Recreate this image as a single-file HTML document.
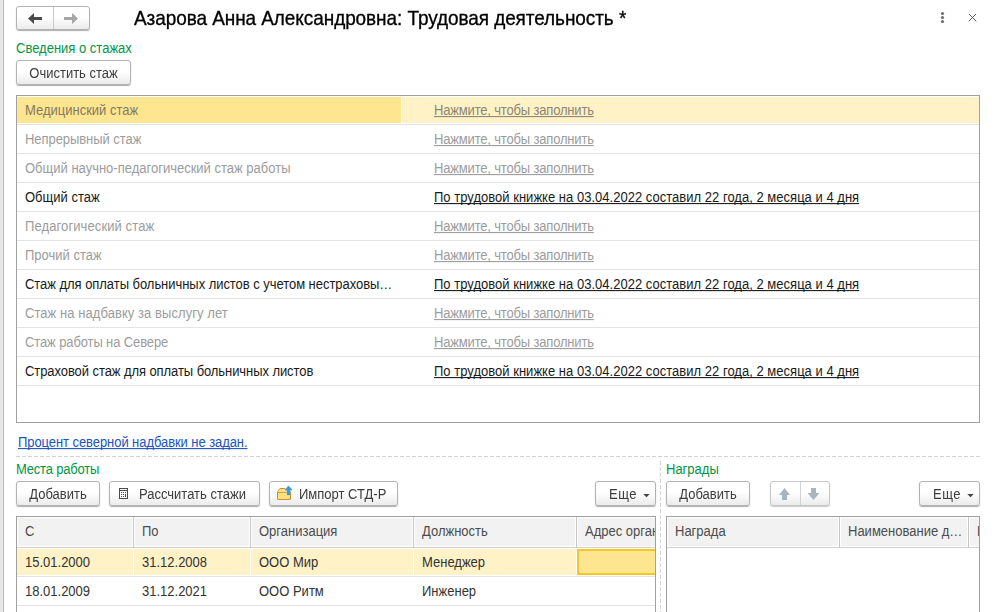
<!DOCTYPE html>
<html lang="ru"><head><meta charset="utf-8">
<title>Трудовая деятельность</title>
<style>
*{box-sizing:border-box;margin:0;padding:0}
html,body{width:996px;height:612px;overflow:hidden;background:#fff}
body{font-family:"Liberation Sans",sans-serif;font-size:13px;color:#333;position:relative;text-decoration-skip-ink:none}
.abs{position:absolute}
.strip{left:0;top:0;width:3px;height:612px;background:linear-gradient(90deg,#e4e4e4,#ececec)}
.gold{left:3px;top:0;width:1px;height:612px;background:#cbba68}
.btn{position:absolute;height:25px;border:1px solid #b3b3b3;border-radius:3px;background:linear-gradient(#fff 0%,#fff 45%,#ebebeb 100%);box-shadow:0 1px 1px rgba(0,0,0,.33);color:#3c3c3c;font-size:13px;line-height:24px;text-align:center;white-space:nowrap;will-change:transform}
.btn.dis{border-color:#c6c6c6;box-shadow:0 1px 1px rgba(0,0,0,.2)}
.title{left:134px;top:8px;font-size:19px;line-height:22px;color:#000;white-space:nowrap;letter-spacing:-0.08px;-webkit-text-stroke:0.3px #000;transform:scaleY(1.06);transform-origin:0 17.6px}
.grp{color:#009646;font-size:13px;line-height:15px;white-space:nowrap}
.tbl{border:1px solid #a0a0a0;background:#fff;overflow:hidden}
.row{position:absolute;left:0;right:0;height:29px;border-bottom:1px solid #e4e4e4;line-height:30px;white-space:nowrap}
.row .c1{position:absolute;left:8px;top:0;color:#9c9c9c}
.row .c2{position:absolute;left:417px;top:0;color:#9c9c9c;text-decoration:underline;letter-spacing:-0.17px}
.row.f .c1{color:#1a1a1a}
.row.f .c2{color:#1a1a1a;letter-spacing:0.02px}
.hdr{position:absolute;top:0;height:31px;border-right:1px solid #c6c6c6;border-bottom:1px solid #d0d0d0;background:#fff;white-space:nowrap;overflow:hidden}
.hdr i{position:absolute;left:1px;top:1px;right:1px;bottom:1px;background:#f2f2f2}
.hdr b{position:absolute;left:8px;top:0;line-height:29px;font-weight:normal;color:#4c4c4c}
.cell{position:absolute;line-height:30px;color:#333;white-space:nowrap}
.row .c1,.row .c2,.cell{transform:scaleY(1.08);transform-origin:0 19.5px}
.hdr b{transform:scaleY(1.08);transform-origin:0 19px}
.grp,.lnk{transform:scaleY(1.08);transform-origin:0 12.3px}
.btn span{position:relative;top:1px;display:inline-block;transform:scaleY(1.08);transform-origin:0 16.5px}
</style></head><body>
<div class="abs strip"></div><div class="abs gold"></div>

<!-- nav -->
<div class="btn" style="left:16px;top:6px;width:74px;height:24px"></div>
<div class="abs" style="left:53px;top:7px;width:1px;height:22px;background:#c9c9c9"></div>
<svg class="abs" style="left:16px;top:6px" width="74" height="24" viewBox="0 0 74 24">
<path d="M12 12.5 L18 7 L18 11 L26 11 L26 14 L18 14 L18 18 Z" fill="#4a4a4a"/>
<path d="M62 12.5 L56 7 L56 11 L48 11 L48 14 L56 14 L56 18 Z" fill="#a6a6a6"/>
</svg>
<div class="abs title">Азарова Анна Александровна: Трудовая деятельность *</div>
<svg class="abs" style="left:936px;top:10px" width="50" height="16" viewBox="0 0 50 16">
<circle cx="6.5" cy="3.5" r="1.6" fill="#707070"/><circle cx="6.5" cy="7.5" r="1.6" fill="#707070"/><circle cx="6.5" cy="11.5" r="1.6" fill="#707070"/>
<path d="M33 4 L40.3 11.3 M40 4 L32.7 11.3" stroke="#5c5c5c" stroke-width="1" fill="none"/>
</svg>

<div class="abs grp" style="left:16px;top:41px">Сведения о стажах</div>
<div class="btn" style="left:16px;top:60px;width:115px"><span>Очистить стаж</span></div>

<!-- main table -->
<div class="abs tbl" style="left:16px;top:95px;width:964px;height:328px">
 <div class="row" style="top:0"><div class="abs" style="left:0;top:1px;width:384px;height:26px;background:#fee58f"></div><div class="abs" style="left:385px;top:1px;right:0;height:26px;background:#fef2c6"></div><span class="c1" style="color:#837a64">Медицинский стаж</span><span class="c2" style="color:#8c8674">Нажмите, чтобы заполнить</span></div>
 <div class="row" style="top:29px"><span class="c1" style="letter-spacing:-0.06px">Непрерывный стаж</span><span class="c2">Нажмите, чтобы заполнить</span></div>
 <div class="row" style="top:58px"><span class="c1">Общий научно-педагогический стаж работы</span><span class="c2">Нажмите, чтобы заполнить</span></div>
 <div class="row f" style="top:87px"><span class="c1">Общий стаж</span><span class="c2">По трудовой книжке на 03.04.2022 составил 22 года, 2 месяца и 4 дня</span></div>
 <div class="row" style="top:116px"><span class="c1" style="letter-spacing:0.1px">Педагогический стаж</span><span class="c2">Нажмите, чтобы заполнить</span></div>
 <div class="row" style="top:145px"><span class="c1">Прочий стаж</span><span class="c2">Нажмите, чтобы заполнить</span></div>
 <div class="row f" style="top:174px"><span class="c1" style="letter-spacing:-0.045px">Стаж для оплаты больничных листов с учетом нестраховы…</span><span class="c2">По трудовой книжке на 03.04.2022 составил 22 года, 2 месяца и 4 дня</span></div>
 <div class="row" style="top:203px"><span class="c1" style="letter-spacing:0.065px">Стаж на надбавку за выслугу лет</span><span class="c2">Нажмите, чтобы заполнить</span></div>
 <div class="row" style="top:232px"><span class="c1" style="letter-spacing:-0.115px">Стаж работы на Севере</span><span class="c2">Нажмите, чтобы заполнить</span></div>
 <div class="row f" style="top:261px"><span class="c1" style="letter-spacing:-0.077px">Страховой стаж для оплаты больничных листов</span><span class="c2">По трудовой книжке на 03.04.2022 составил 22 года, 2 месяца и 4 дня</span></div>
</div>

<div class="abs lnk" style="left:18px;top:435px;color:#2053bd;text-decoration:underline;line-height:16px;white-space:nowrap;letter-spacing:-0.07px">Процент северной надбавки не задан.</div>
<svg class="abs" style="left:0;top:450px" width="996" height="162" viewBox="0 0 996 162">
<path d="M16 6.5 H980" stroke="#d2d2d2" stroke-width="1" stroke-dasharray="4 2" fill="none"/>
<path d="M660.5 11 V162" stroke="#d2d2d2" stroke-width="1" stroke-dasharray="4 2" fill="none"/>
</svg>

<div class="abs grp" style="left:16px;top:462px;letter-spacing:-0.2px">Места работы</div>
<div class="abs grp" style="left:666px;top:462px">Награды</div>

<div class="btn" style="left:16px;top:481px;width:84px"><span>Добавить</span></div>
<div class="btn" style="left:109px;top:481px;width:151px;text-align:left;padding-left:29px"><span>Рассчитать стажи</span></div>
<div class="btn" style="left:269px;top:481px;width:129px;text-align:left;padding-left:29px"><span>Импорт СТД-Р</span></div>
<div class="btn" style="left:595px;top:481px;width:61px;text-align:left;padding-left:13px;letter-spacing:0.5px"><span>Еще</span></div>
<div class="btn" style="left:666px;top:481px;width:84px"><span>Добавить</span></div>
<div class="btn dis" style="left:770px;top:481px;width:60px"></div>
<div class="abs" style="left:800px;top:482px;width:1px;height:23px;background:#d2d2d2"></div>
<div class="btn" style="left:919px;top:481px;width:61px;text-align:left;padding-left:13px;letter-spacing:0.5px"><span>Еще</span></div>

<!-- button icons -->
<svg class="abs" style="left:0;top:481px" width="996" height="26" viewBox="0 0 996 26">
 <!-- calculator -->
 <rect x="119.5" y="7.5" width="8" height="10" fill="#fff" stroke="#4a4a4a" stroke-width="1"/>
 <rect x="120" y="9" width="7" height="1" fill="#4a4a4a"/>
 <g fill="#4a4a4a"><rect x="121" y="11" width="1" height="1"/><rect x="123" y="11" width="1" height="1"/><rect x="125" y="11" width="1" height="1"/><rect x="121" y="13" width="1" height="1"/><rect x="123" y="13" width="1" height="1"/><rect x="121" y="15" width="1" height="1"/><rect x="123" y="15" width="1" height="1"/><rect x="125" y="13" width="1" height="3"/></g>
 <!-- folder import -->
 <path d="M277.5 18 V10.5 L280 7.5 H285 L287.5 10.5 H290.5 V18 Q290.5 18.5 290 18.5 H278 Q277.5 18.5 277.5 18 Z" fill="#ffe07a" stroke="#cf8d33" stroke-width="1" stroke-linejoin="round"/>
 <path d="M278 11.5 H290" stroke="#d9a040" stroke-width="1"/>
 <path d="M288.5 5 L292 9 H289.8 V14 H287.2 V9 H285 Z" fill="none" stroke="#fff3cf" stroke-width="1.3" stroke-linejoin="round"/>
 <path d="M288.5 5 L292 9 H289.8 V14 H287.2 V9 H285 Z" fill="#2f9ceb" stroke="#1f84d6" stroke-width="0.5" stroke-linejoin="round"/>
 <path d="M290.5 11 V18" stroke="#cf8d33" stroke-width="1" fill="none"/>
 <!-- dropdown triangles -->
 <path d="M643.3 13 H649.7 L646.5 16.2 Z" fill="#444"/>
 <path d="M967.3 13 H973.7 L970.5 16.2 Z" fill="#444"/>
 <!-- up / down -->
 <path d="M784.5 7 L790 14 H787 V19 H782 V14 H779 Z" fill="#a9b5bd"/>
 <path d="M811 7 H816 V12 H819.5 L813.5 19 L807.5 12 H811 Z" fill="#a9b5bd"/>
</svg>

<!-- left table -->
<div class="abs tbl" style="left:16px;top:516px;width:640px;height:110px">
 <div class="hdr" style="left:0;width:117px"><i></i><b>С</b></div>
 <div class="hdr" style="left:117px;width:117px"><i></i><b>По</b></div>
 <div class="hdr" style="left:234px;width:163px"><i></i><b>Организация</b></div>
 <div class="hdr" style="left:397px;width:163px"><i></i><b>Должность</b></div>
 <div class="hdr" style="left:560px;width:90px;border-right:none"><i></i><b>Адрес организации</b></div>
 <div class="abs" style="left:0;top:32px;width:116px;height:26px;background:#fef2c6"></div>
 <div class="abs" style="left:117px;top:32px;width:116px;height:26px;background:#fef2c6"></div>
 <div class="abs" style="left:234px;top:32px;width:162px;height:26px;background:#fef2c6"></div>
 <div class="abs" style="left:397px;top:32px;width:162px;height:26px;background:#fef2c6"></div>
 <div class="abs" style="left:560px;top:32px;width:90px;height:26px;background:#fee58f;border:2px solid #f6c626;border-right:none"></div>
 <div class="abs" style="left:0;top:59px;width:640px;height:1px;background:#e4e4e4"></div>
 <div class="abs" style="left:0;top:88px;width:640px;height:1px;background:#e4e4e4"></div>
 <span class="cell" style="left:8px;top:31px">15.01.2000</span><span class="cell" style="left:125px;top:31px">31.12.2008</span><span class="cell" style="left:242px;top:31px">ООО Мир</span><span class="cell" style="left:405px;top:31px">Менеджер</span>
 <span class="cell" style="left:8px;top:60px">18.01.2009</span><span class="cell" style="left:125px;top:60px">31.12.2021</span><span class="cell" style="left:242px;top:60px">ООО Ритм</span><span class="cell" style="left:405px;top:60px">Инженер</span>
</div>

<!-- right table -->
<div class="abs tbl" style="left:666px;top:516px;width:314px;height:110px">
 <div class="hdr" style="left:0;width:173px"><i></i><b>Награда</b></div>
 <div class="hdr" style="left:173px;width:129px"><i></i><b>Наименование д…</b></div>
 <div class="hdr" style="left:302px;width:20px"><i></i><b>Н</b></div>
</div>
</body></html>
